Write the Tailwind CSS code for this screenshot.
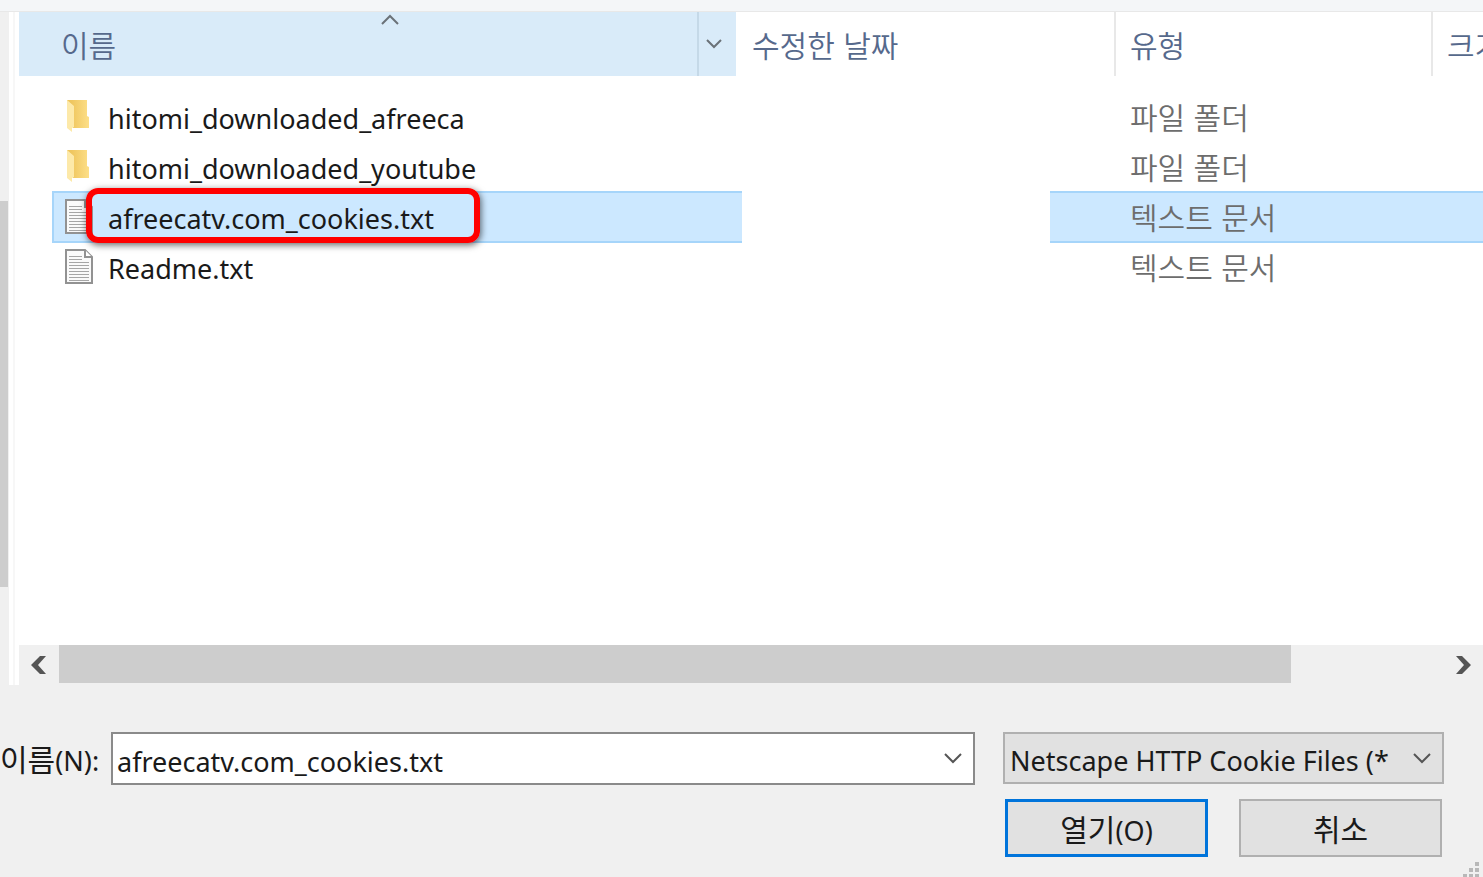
<!DOCTYPE html>
<html lang="ko">
<head>
  <meta charset="UTF-8" />
  <meta name="viewport" content="width=device-width, initial-scale=1.0">
  <title>열기</title>
  <script src="https://cdn.jsdelivr.net/npm/@tailwindcss/browser@4"></script>
</head>
<body class="min-h-screen flex flex-col overflow-hidden bg-[#f0f0f0] font-['Noto_Sans','Noto_Sans_CJK_KR',sans-serif] text-[27px] leading-[36px] text-[#1a1a1a]">
  <!-- bottom edge of the toolbar -->
  <div class="h-3 shrink-0 bg-[#f4f6f8] border-b border-[#e8e8e8]"></div>

  <div class="flex-1 flex">
    <!-- navigation pane scrollbar -->
    <div class="w-[9px] shrink-0 flex flex-col pr-px">
      <div class="grow-[189]"></div>
      <div class="grow-[386] bg-[#cdcdcd]"></div>
      <div class="grow-[98]"></div>
    </div>
    <div class="w-[10px] shrink-0 bg-white pl-1">
      <div class="w-0.5 h-full bg-[#f7f7f7]"></div>
    </div>

    <main class="flex-1 min-w-0 flex flex-col">
      <div class="flex-1 bg-white overflow-hidden">
        <table class="w-full table-fixed border-collapse text-left">
          <colgroup>
            <col class="w-[33px]">
            <col>
            <col class="w-[378px]">
            <col class="w-[317px]">
            <col class="w-[52px]">
          </colgroup>
          <thead class="text-[30px] text-[#56698c] font-['Noto_Sans_CJK_KR',sans-serif]">
            <tr class="h-16">
              <th colspan="2" class="relative p-0 bg-[#d9ebf9] font-[350]">
                <div class="flex h-16 items-stretch">
                  <button class="flex-1 text-left pl-[42px]">이름</button>
                  <button class="w-[39px] border-l-2 border-[#c5d9e8] flex items-center justify-center pr-2" aria-label="필터">
                    <svg class="w-[18px] h-3" viewBox="0 0 18 12" fill="none" stroke="#6b7278" stroke-width="2"><path d="M2 2l7 7 7-7"/></svg>
                  </button>
                </div>
                <svg class="absolute top-0.5 left-[361px] w-5 h-3" viewBox="0 0 20 12" fill="none" stroke="#6b7278" stroke-width="2"><path d="M2 10l8-8 8 8"/></svg>
              </th>
              <th class="p-0 font-[350]"><button class="w-full h-16 text-left pl-4">수정한 날짜</button></th>
              <th class="p-0 font-[350]"><button class="w-full h-16 text-left pl-[14px] border-l-2 border-[#e8e8e8]">유형</button></th>
              <th class="p-0 font-[350] overflow-hidden"><button class="w-full h-16 text-left pl-[14px] border-l-2 border-[#e8e8e8] whitespace-nowrap overflow-hidden">크기</button></th>
            </tr>
          </thead>
          <tbody>
            <tr class="h-4"><td colspan="5" class="p-0"></td></tr>
            <tr class="h-[50px]">
              <td class="p-0"></td>
              <td class="p-0">
                <div class="flex items-center pl-[13px] gap-[15px]">
                  <svg class="w-7 h-9" viewBox="0 0 28 36"><defs><linearGradient id="folder"><stop offset="0.2" stop-color="#efc65f"/><stop offset="1" stop-color="#fddf88"/></linearGradient></defs><path d="M2 1h20v16l2 1v11H8z" fill="url(#folder)"/><path d="M2 1l7 6v21l-2 1v4l-5-4z" fill="#fde9a9"/></svg>
                  <span class="pt-1">hitomi_downloaded_afreeca</span>
                </div>
              </td>
              <td class="p-0"></td>
              <td class="p-0 pl-4 pb-0.5 font-['Noto_Sans_CJK_KR',sans-serif] text-[30px] font-[350] text-[#6d6d6d]">파일 폴더</td>
              <td class="p-0"></td>
            </tr>
            <tr class="h-[50px]">
              <td class="p-0"></td>
              <td class="p-0">
                <div class="flex items-center pl-[13px] gap-[15px]">
                  <svg class="w-7 h-9" viewBox="0 0 28 36"><path d="M2 1h20v16l2 1v11H8z" fill="url(#folder)"/><path d="M2 1l7 6v21l-2 1v4l-5-4z" fill="#fde9a9"/></svg>
                  <span class="pt-1">hitomi_downloaded_youtube</span>
                </div>
              </td>
              <td class="p-0"></td>
              <td class="p-0 pl-4 pb-0.5 font-['Noto_Sans_CJK_KR',sans-serif] text-[30px] font-[350] text-[#6d6d6d]">파일 폴더</td>
              <td class="p-0"></td>
            </tr>
            <!-- selected row -->
            <tr class="h-[50px]" aria-selected="true">
              <td class="p-0"></td>
              <td class="relative p-0">
                <div class="flex items-center h-[52px] -my-px pl-[11px] gap-[15px] bg-[#cce8ff] border-2 border-r-0 border-[#a6d5fa]">
                  <svg class="w-7 h-9" viewBox="0 0 28 36"><path d="M1 1h19l7 7v26H1z" fill="#fafafa" stroke="#929292" stroke-width="2"/><path d="M20 1v7h7" fill="#fff" stroke="#929292" stroke-width="2"/><path d="M4 7.500h13M4 10.500h13M4 13.500h20M4 16.500h20M4 19.500h20M4 22.500h20M4 25.500h20M4 28.500h20M4 31.500h20" stroke="#a6a6a6" stroke-width="1"/></svg>
                  <span class="pt-1">afreecatv.com_cookies.txt</span>
                </div>
                <div class="absolute -top-1 left-[34px] w-[394px] h-[55px] border-[6px] border-[#ff0000] rounded-xl shadow-[1px_2px_7px_rgba(0,0,0,0.6)]"></div>
              </td>
              <td class="p-0">
                <div class="flex h-[52px] -my-px">
                  <div class="w-1.5 bg-[#cce8ff] border-y-2 border-[#a6d5fa]"></div>
                  <div class="w-[308px]"></div>
                  <div class="flex-1 bg-[#cce8ff] border-y-2 border-[#a6d5fa]"></div>
                </div>
              </td>
              <td class="p-0"><div class="flex items-center h-[52px] -my-px pl-4 pb-0.5 font-['Noto_Sans_CJK_KR',sans-serif] text-[30px] font-[350] text-[#6d6d6d] bg-[#cce8ff] border-y-2 border-[#a6d5fa]">텍스트 문서</div></td>
              <td class="p-0"><div class="h-[52px] -my-px bg-[#cce8ff] border-y-2 border-[#a6d5fa]"></div></td>
            </tr>
            <tr class="h-[50px]">
              <td class="p-0"></td>
              <td class="p-0">
                <div class="flex items-center pl-[13px] gap-[15px]">
                  <svg class="w-7 h-9" viewBox="0 0 28 36"><path d="M1 1h19l7 7v26H1z" fill="#fafafa" stroke="#929292" stroke-width="2"/><path d="M20 1v7h7" fill="#fff" stroke="#929292" stroke-width="2"/><path d="M4 7.500h13M4 10.500h13M4 13.500h20M4 16.500h20M4 19.500h20M4 22.500h20M4 25.500h20M4 28.500h20M4 31.500h20" stroke="#a6a6a6" stroke-width="1"/></svg>
                  <span class="pt-1">Readme.txt</span>
                </div>
              </td>
              <td class="p-0"></td>
              <td class="p-0 pl-4 pb-0.5 font-['Noto_Sans_CJK_KR',sans-serif] text-[30px] font-[350] text-[#6d6d6d]">텍스트 문서</td>
              <td class="p-0"></td>
            </tr>
          </tbody>
        </table>
      </div>

      <!-- horizontal scrollbar -->
      <div class="flex h-[38px] mb-0.5">
        <button class="w-10 flex items-center justify-center pt-0.5" aria-label="왼쪽으로">
          <svg class="w-4 h-[18px]" viewBox="0 0 16 18" fill="#555"><path d="M9 0h6L7 9l8 9H9L0 9z"/></svg>
        </button>
        <div class="flex-1 flex">
          <div class="w-[89%] bg-[#cdcdcd]"></div>
        </div>
        <button class="w-10 flex items-center justify-center pt-0.5" aria-label="오른쪽으로">
          <svg class="w-4 h-[18px]" viewBox="0 0 16 18" fill="#555"><path d="M7 0H1l8 9-8 9h6l9-9z"/></svg>
        </button>
      </div>
    </main>
  </div>

  <footer class="relative shrink-0 pt-[47px] pb-5 pr-[39px]">
    <div class="flex items-start">
      <label for="fileName" class="w-[111px] shrink-0 self-center pt-1 whitespace-nowrap"><span class="text-[30px]">이름</span>(N):</label>
      <div class="relative flex-1">
        <input type="text" id="fileName" value="afreecatv.com_cookies.txt" class="block w-full h-[53px] pl-1 pt-1.5 pr-12 bg-white border-2 border-[#8a8a8a] outline-none" />
        <button class="absolute right-3 top-5 w-5 h-3" aria-label="이전 파일 이름">
          <svg class="w-5 h-3" viewBox="0 0 20 12" fill="none" stroke="#555" stroke-width="2"><path d="M2 2l8 8 8-8"/></svg>
        </button>
      </div>
      <div class="relative w-[441px] ml-7">
        <select aria-label="파일 형식" class="block appearance-none w-full h-[52px] pl-[5px] pt-1.5 pr-10 bg-[#e1e1e1] border-2 border-[#b0b0b0] outline-none">
          <option>Netscape HTTP Cookie Files (*</option>
        </select>
        <svg class="absolute right-3 top-5 w-5 h-3 pointer-events-none" viewBox="0 0 20 12" fill="none" stroke="#555" stroke-width="2"><path d="M2 2l8 8 8-8"/></svg>
      </div>
    </div>
    <div class="flex justify-end gap-[31px] mt-[14px] pr-0.5">
      <button class="w-[203px] h-[58px] pt-1 bg-[#e1e1e1] border-[3px] border-[#0074db]"><span class="text-[30px]">열기</span>(O)</button>
      <button class="w-[203px] h-[58px] pt-1 bg-[#e1e1e1] border-2 border-[#b0b0b0]"><span class="text-[30px]">취소</span></button>
    </div>
    <!-- resize grip -->
    <svg class="absolute right-0.5 bottom-0 w-[18px] h-4" viewBox="0 0 18 16" fill="#b8b8b8"><path d="M12 1h4v4h-4zM6 7h4v4H6zM12 7h4v4h-4zM0 13h4v3H0zM6 13h4v3H6zM12 13h4v3h-4z"/></svg>
  </footer>
</body>
</html>
